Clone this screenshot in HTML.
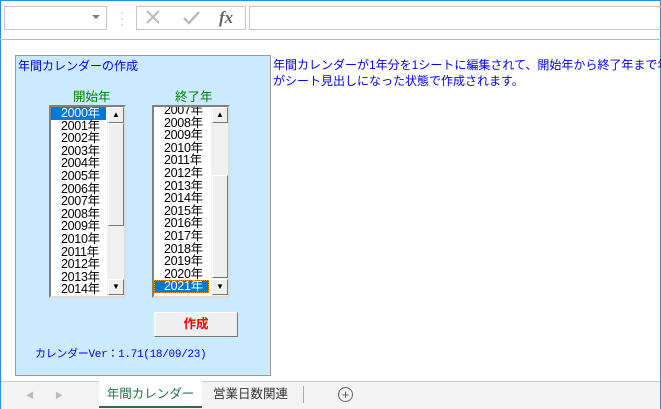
<!DOCTYPE html><html><head><style>
body{margin:0;width:661px;height:409px;position:relative;background:#fff;font-family:"Liberation Sans","Noto Sans CJK JP",sans-serif;overflow:hidden}
.a{position:absolute}
.lb{position:absolute;background:#fff;border:2px solid #808080;border-right-color:#ddd;border-bottom-color:#ddd;overflow:hidden}
.it{height:12.6px;line-height:12.6px;font-size:12.5px;padding-left:10px;color:#000;letter-spacing:-0.3px}
.sel{background:#0078d7;color:#fff}
.sb{position:absolute;right:0;top:0;width:17px;bottom:0;background:#f0f0f0}
.btn{position:absolute;left:1px;width:14px;height:14px;background:#efefef;border:1px solid #fff;border-right-color:#777;border-bottom-color:#777;font-size:8px;text-align:center;line-height:14px}
.th{position:absolute;left:1px;width:14px;background:#efefef;border:1px solid #fff;border-right-color:#777;border-bottom-color:#777}
</style></head><body>
<div class="a" style="left:0;top:0;width:1px;height:409px;background:#2b8ee6"></div>
<div class="a" style="right:0;top:0;width:1px;height:409px;background:#2b8ee6"></div>
<div class="a" style="left:0;top:0;width:661px;height:1px;background:#2b8ee6"></div>
<div class="a" style="left:0;bottom:0;width:661px;height:1px;background:#2b8ee6"></div>
<div class="a" style="left:4px;top:6px;width:101px;height:22px;border:1px solid #c6c6c6"></div>
<div class="a" style="left:92px;top:15px;width:0;height:0;border-left:4px solid transparent;border-right:4px solid transparent;border-top:4px solid #777"></div>
<div class="a" style="left:120px;top:9px;color:#aaa;font-size:12px;line-height:6px">·<br>·<br>·</div>
<div class="a" style="left:136px;top:6px;width:108px;height:22px;border:1px solid #c6c6c6"></div>
<svg class="a" style="left:140px;top:8px" width="100" height="20"><path d="M7 3L19 15M19 3L7 15" stroke="#bbb" stroke-width="2"/><path d="M44 10l5 5 10-11" stroke="#bbb" stroke-width="2.5" fill="none"/><text x="79" y="15" font-family="Liberation Serif" font-style="italic" font-weight="bold" font-size="17" fill="#666">fx</text></svg>
<div class="a" style="left:249px;top:6px;width:420px;height:22px;border:1px solid #c6c6c6"></div>
<div class="a" style="left:0;top:39px;width:661px;height:1px;background:#bbb"></div>
<div class="a" style="left:15px;top:55px;width:254px;height:319px;background:#cceafd;border:1px solid #9a9a9a"></div>
<div class="a" style="left:18px;top:57px;color:#0000ff;font-size:12px">年間カレンダーの作成</div>
<div class="a" style="left:73px;top:86px;color:#008000;font-size:12.5px">開始年</div>
<div class="a" style="left:175px;top:86px;color:#008000;font-size:12.5px">終了年</div>
<div class="lb" style="left:49px;top:105px;width:73px;height:189px">
<div class="it sel" style="width:45px">2000年</div><div class="it">2001年</div><div class="it">2002年</div><div class="it">2003年</div><div class="it">2004年</div><div class="it">2005年</div><div class="it">2006年</div><div class="it">2007年</div><div class="it">2008年</div><div class="it">2009年</div><div class="it">2010年</div><div class="it">2011年</div><div class="it">2012年</div><div class="it">2013年</div><div class="it">2014年</div>
<div class="sb"><div class="btn" style="top:0">▲</div><div class="th" style="top:16px;height:101px"></div><div class="btn" style="bottom:1px">▼</div></div></div>
<div class="lb" style="left:152px;top:105px;width:74px;height:189px">
<div style="margin-top:-3px"><div class="it">2007年</div><div class="it">2008年</div><div class="it">2009年</div><div class="it">2010年</div><div class="it">2011年</div><div class="it">2012年</div><div class="it">2013年</div><div class="it">2014年</div><div class="it">2015年</div><div class="it">2016年</div><div class="it">2017年</div><div class="it">2018年</div><div class="it">2019年</div><div class="it">2020年</div><div class="it sel" style="width:45px;outline:1px dotted #f90;outline-offset:-1px">2021年</div></div>
<div class="sb"><div class="btn" style="top:0">▲</div><div class="th" style="top:68px;height:101px"></div><div class="btn" style="bottom:1px">▼</div></div></div>
<div class="a" style="left:154px;top:312px;width:82px;height:23px;background:#efefef;border:1px solid #fff;border-right-color:#777;border-bottom-color:#777;text-align:center;line-height:23px;color:#ff0000;font-weight:bold;font-size:12.5px">作成</div>
<div class="a" style="left:35px;top:345px;color:#0000ff;font-size:11px;letter-spacing:-0.3px;font-family:'Liberation Mono','Noto Sans CJK JP',monospace">カレンダーVer：1.71(18/09/23)</div>
<div class="a" style="left:273px;top:57px;color:#0000ff;font-size:12px;line-height:16px;white-space:nowrap">年間カレンダーが1年分を1シートに編集されて、開始年から終了年まで年<br>がシート見出しになった状態で作成されます。</div>
<div class="a" style="left:1px;top:381px;width:659px;height:27px;background:#f3f3f3;border-top:1px solid #ccc"></div>
<div class="a" style="left:26px;top:390px;color:#bbb;font-size:8px">◀</div>
<div class="a" style="left:55px;top:390px;color:#bbb;font-size:8px">▶</div>
<div class="a" style="left:99px;top:381px;width:103px;height:25px;background:#fff;border-bottom:2px solid #217346;text-align:center;line-height:26px;color:#217346;font-size:12.5px">年間カレンダー</div>
<div class="a" style="left:213px;top:381px;height:26px;line-height:26px;color:#333;font-size:12.5px">営業日数関連</div>
<div class="a" style="left:303px;top:386px;width:1px;height:17px;background:#aaa"></div>
<div class="a" style="left:338px;top:387px;width:13px;height:13px;border:1px solid #666;border-radius:50%;text-align:center;line-height:13px;font-size:13px;color:#555">+</div>
</body></html>
